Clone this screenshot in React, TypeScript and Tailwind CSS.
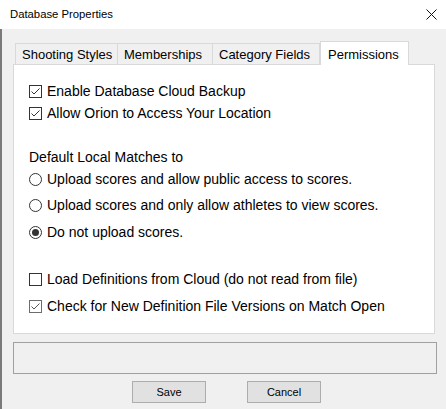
import React from "react";

function CheckBox({ checked, light }: { checked: boolean; light?: boolean }) {
  return (
    <div
      className={`w-[13px] h-[13px] bg-white border ${light ? "border-[#6d6d6d]" : "border-[#333333]"} flex items-center justify-center shrink-0`}
    >
      {checked && (
        <svg width="11" height="11" viewBox="0 0 11 11">
          <path d="M1.5 5.5 L4 8 L9.5 2.5" fill="none" stroke={light ? "#555" : "#333"} strokeWidth="1" />
        </svg>
      )}
    </div>
  );
}

function Radio({ checked }: { checked: boolean }) {
  return (
    <div className="w-[13px] h-[13px] rounded-full bg-white border border-[#333333] flex items-center justify-center shrink-0">
      {checked && <div className="w-[7px] h-[7px] rounded-full bg-[#333333]" />}
    </div>
  );
}

function Row({ children, className = "" }: { children: React.ReactNode; className?: string }) {
  return <div className={`h-[22px] flex items-center gap-[5px] ${className}`}>{children}</div>;
}

export default function App() {
  return (
    <div className="w-[446px] h-[409px] bg-[#f0f0f0] overflow-hidden font-['Liberation_Sans',Arial,sans-serif] text-black">
      <div className="h-[29px] bg-white flex items-center justify-between pl-[10px] pr-[8px]">
        <span className="text-[11.3px] leading-none">Database Properties</span>
        <svg width="11" height="11" viewBox="0 0 11 11" className="mr-[1px]">
          <path d="M0.5 0.5 L10.5 10.5 M10.5 0.5 L0.5 10.5" stroke="#111" strokeWidth="1" />
        </svg>
      </div>
      <div className="border-l-2 border-[#7a7a7a] h-[380px]">
        <div className="pt-[12px] ml-[13px] flex items-end h-[35px] text-[13px]">
          <div className="w-[103px] h-[21px] border border-b-0 border-[#d9d9d9] flex items-center pl-[6px] pt-[1px]">
            Shooting Styles
          </div>
          <div className="w-[95px] h-[21px] border border-l-0 border-b-0 border-[#d9d9d9] flex items-center pl-[6px] pt-[1px]">
            Memberships
          </div>
          <div className="w-[107px] h-[21px] border border-l-0 border-b-0 border-[#d9d9d9] flex items-center pl-[6px] pt-[1px]">
            Category Fields
          </div>
          <div className="relative z-10 -mb-px w-[89px] h-[24px] bg-white border border-b-0 border-[#d9d9d9] flex items-start pl-[7px] pt-[3px]">
            Permissions
          </div>
        </div>
        <div className="ml-[11px] w-[422px] h-[270px] bg-white border border-[#d9d9d9] pl-[15px] pt-[15px] text-[14px]">
          <Row>
            <CheckBox checked />
            <span>Enable Database Cloud Backup</span>
          </Row>
          <Row>
            <CheckBox checked />
            <span>Allow Orion to Access Your Location</span>
          </Row>
          <Row className="mt-[22px]">
            <span>Default Local Matches to</span>
          </Row>
          <Row>
            <Radio checked={false} />
            <span>Upload scores and allow public access to scores.</span>
          </Row>
          <Row className="mt-[4px]">
            <Radio checked={false} />
            <span>Upload scores and only allow athletes to view scores.</span>
          </Row>
          <Row className="mt-[5px]">
            <Radio checked />
            <span>Do not upload scores.</span>
          </Row>
          <Row className="mt-[25px]">
            <CheckBox checked={false} />
            <span>Load Definitions from Cloud (do not read from file)</span>
          </Row>
          <Row className="mt-[5px]">
            <CheckBox checked light />
            <span>Check for New Definition File Versions on Match Open</span>
          </Row>
        </div>
        <div className="ml-[11px] mt-[8px] w-[424px] h-[32px] border border-[#a0a0a0] bg-[#f0f0f0]" />
        <div className="flex mt-[7px] text-[11px]">
          <div className="ml-[130px] w-[74px] h-[22px] bg-[#e1e1e1] border border-[#adadad] flex items-center justify-center">
            Save
          </div>
          <div className="ml-[41px] w-[74px] h-[22px] bg-[#e1e1e1] border border-[#adadad] flex items-center justify-center">
            Cancel
          </div>
        </div>
      </div>
    </div>
  );
}
